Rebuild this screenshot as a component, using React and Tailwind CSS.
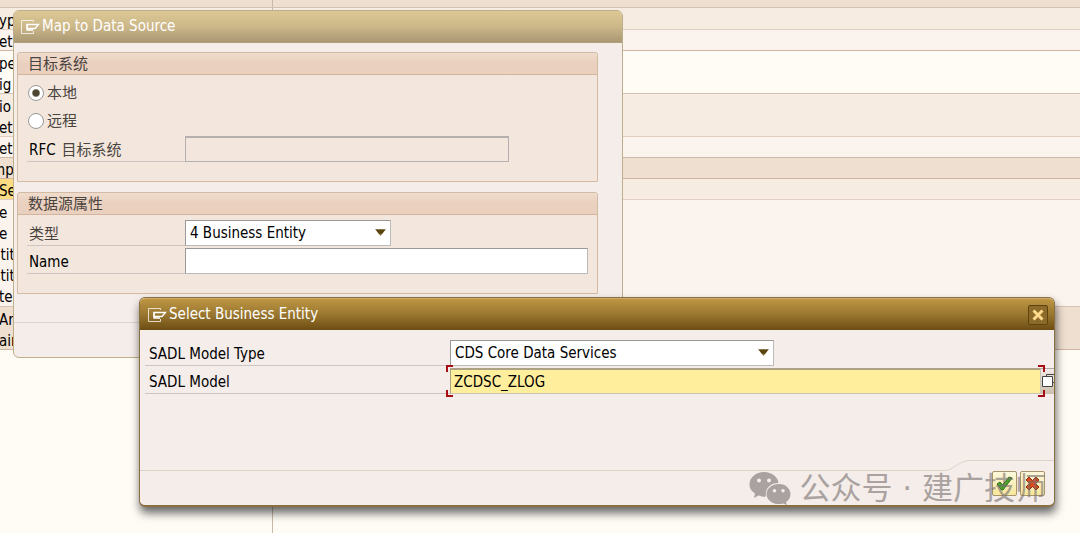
const latin = "font-['DejaVu_Sans_Condensed','Noto_Sans_CJK_SC',sans-serif]";

const bands = [
  { rows: ['yp'], box: 'h-[22px] bg-[#f6ece1] border-[#e0cfc0]' },
  { rows: ['et'], box: 'h-[21px] bg-[#fbf3ee] border-[#d0b6a2]' },
  { rows: ['pe', 'ig'], box: 'h-[43px] bg-[#fffcf6] border-[#d3c2b1]' },
  { rows: ['io', 'et'], box: 'h-[43px] bg-[#f6ece1] border-[#e0cfc0]' },
  { rows: ['etS'], box: 'h-[21px] bg-[#fbf3ee] border-[#cdb9a8]' },
  { rows: ['mp'], box: 'h-[21px] bg-[#efdfd0] border-[#cfb5a2]' },
  { rows: ['Set'], box: 'h-[21px] bg-[#f6ece1] border-[#e0cfc0]', selected: true },
  { rows: ['e', 'e', 'ntit', 'ntit', 'te'], box: 'h-[107px] bg-[#fbf3ee] border-[#d8c3b3]' },
  { rows: ['Art', 'ain'], box: 'h-[43px] bg-[#efdfd0] border-[#d0b6a2]' },
];

const clippedWide = ['ntit', 'mp'];

function PropertyList() {
  return (
    <div className="flex min-h-screen flex-col bg-[#fffcf6]">
      <div className="flex h-2 border-b border-[#d3c2b1] bg-[#efdfd0]">
        <div className="w-[273px] border-r border-[#c9b9ab]" />
      </div>
      {bands.map((band, i) => (
        <div key={i} className={`flex border-b ${band.box}`}>
          <div
            className={`flex w-[273px] flex-col border-r border-[#c9b9ab] ${band.selected ? 'bg-[#fcdc83]' : ''}`}
          >
            {band.rows.map((text, j) => (
              <span
                key={j}
                className={`flex min-h-0 flex-1 items-center pt-1 leading-4 ${clippedWide.includes(text) ? '-ml-2' : '-ml-px'}`}
              >
                {text}
              </span>
            ))}
          </div>
        </div>
      ))}
      <div className="flex flex-1">
        <div className="w-[273px] border-r border-[#c9b9ab]" />
      </div>
    </div>
  );
}

function WindowIcon() {
  return (
    <svg className="h-4 w-5 shrink-0" viewBox="0 0 20 16" fill="none" stroke="currentColor" aria-hidden="true">
      <path d="M13.500 3V1.500H1.500V14.500H13.500V12" strokeWidth="1" opacity="0.75" />
      <path d="M7 5.500H18.500L15 9.500H7Z" strokeWidth="1.300" />
      <path d="M7 5V11H13" strokeWidth="1.300" />
    </svg>
  );
}

function Group({ id, title, children }) {
  return (
    <fieldset aria-labelledby={id} className="rounded-t-[3px] border border-[#d3baa3] bg-[#f3e7dd]">
      <h3
        id={id}
        className="flex h-[22px] items-center rounded-t-[3px] border-b border-[#d3b49f] bg-linear-to-b from-[#efdccd] via-[#ead0be] to-[#ead0be] pl-2.5 leading-5 text-[#4a4440]"
      >
        {title}
      </h3>
      <div className="flex flex-col gap-0.5 pt-[5px] pr-[9px] pl-[9px]">{children}</div>
    </fieldset>
  );
}

function Arrow() {
  return (
    <svg
      className="pointer-events-none absolute top-[9px] right-[5px] h-[7px] w-[11px]"
      viewBox="0 0 11 7"
      aria-hidden="true"
    >
      <path d="M0 0H11L7 5L5.500 7L4 5Z" fill="#8a7850" />
      <path d="M1 1H10L7 5H4Z" fill="#5d460e" />
    </svg>
  );
}

function Select({ id, width, value }) {
  return (
    <div className={`relative flex ${width}`}>
      <select
        id={id}
        className="h-[26px] w-full appearance-none border border-t-[#999] border-r-[#bbb] border-b-[#bbb] border-l-[#999] bg-white pl-1 leading-5 text-black"
      >
        <option>{value}</option>
      </select>
      <Arrow />
    </div>
  );
}

const labelLine = 'flex h-[26px] items-center border-b border-[#cdc5c1] shrink-0 pt-[3px]';

export default function App() {
  return (
    <div className={`relative min-h-screen overflow-hidden text-[15px] text-black ${latin}`}>
      <PropertyList />

      <section
        aria-label="Map to Data Source"
        className="absolute top-2.5 left-[13px] flex h-[348px] w-[610px] flex-col rounded-md border border-[#bfae8b] bg-[#f5edea]"
      >
        <h2 className="flex h-8 items-center gap-0.5 rounded-t-[5px] border-b border-[#b5a179] bg-linear-to-b from-[#dcc794] via-[#cdb88a] to-[#a99873] pl-1.5 text-white">
          <WindowIcon />
          Map to Data Source
        </h2>
        <div className="flex flex-col gap-2.5 pt-[9px] pr-6 pl-[3px]">
          <Group id="group-target" title="目标系统">
            <label className="flex h-[26px] items-center gap-[3px] pl-px text-[#4a4440]">
              <input
                type="radio"
                name="target"
                defaultChecked
                className="size-4 appearance-none rounded-full border border-[#999] bg-white bg-radial from-[#4d4630] from-30% to-white to-45%"
              />
              <span className="pt-px">本地</span>
            </label>
            <label className="flex h-[26px] items-center gap-[3px] pl-px text-[#4a4440]">
              <input type="radio" name="target" className="size-4 appearance-none rounded-full border border-[#999] bg-white" />
              <span className="pt-px">远程</span>
            </label>
            <div className="flex pb-[19px]">
              <label htmlFor="rfc" className={`${labelLine} w-[158px] gap-1.5 pl-0.5`}>
                RFC <span className="text-[#4a4440]">目标系统</span>
              </label>
              <input
                id="rfc"
                disabled
                className="h-[26px] w-[324px] border border-t-2 border-[#b5b0ad] bg-[#f3e7dd] px-1"
              />
            </div>
          </Group>
          <Group id="group-source" title="数据源属性">
            <div className="flex">
              <label htmlFor="kind" className={`${labelLine} w-[158px] pl-0.5 text-[#4a4440]`}>
                类型
              </label>
              <Select id="kind" width="w-[206px]" value="4 Business Entity" />
            </div>
            <div className="flex pb-[19px]">
              <label htmlFor="name" className={`${labelLine} w-[158px] pl-0.5`}>
                Name
              </label>
              <input id="name" className="h-[26px] min-w-0 flex-1 border border-t-[#999] border-r-[#bbb] border-b-[#bbb] border-l-[#999] bg-white px-1" />
            </div>
          </Group>
        </div>
        <div className="mt-auto h-[35px] border-t border-[#dfd3cb]" />
      </section>

      <section
        aria-label="Select Business Entity"
        className="absolute top-[297px] right-[25px] left-[139px] flex h-[210px] flex-col rounded-md border border-b-2 border-[#8a6f42] bg-[#f5edea] shadow-[1px_6px_10px_rgba(0,0,0,0.6)]"
      >
        <div className="flex h-8 shrink-0 items-center justify-between rounded-t-[5px] border-t border-[#cdab68] bg-linear-to-b from-[#bd9643] via-[#9a7730] to-[#6d4d13] pr-1.5 pl-[7px] text-white">
          <h2 className="flex items-center gap-0.5">
            <WindowIcon />
            Select Business Entity
          </h2>
          <button
            type="button"
            aria-label="Close"
            className="flex size-5 items-center justify-center rounded-xs border border-[#5f430d] bg-[#8b6a2a]"
          >
            <svg className="size-3" viewBox="0 0 12 12" stroke="#ffd98c" strokeWidth="3" aria-hidden="true">
              <path d="M1.500 1.500L10.500 10.500M10.500 1.500L1.500 10.500" />
            </svg>
          </button>
        </div>
        <div className="flex flex-1 flex-col gap-0.5 pt-2.5 pl-[5px]">
          <div className="flex">
            <label htmlFor="modelType" className={`${labelLine} w-[305px] pl-1`}>
              SADL Model Type
            </label>
            <Select id="modelType" width="w-[324px]" value="CDS Core Data Services" />
          </div>
          <div className="relative flex">
            <label htmlFor="model" className={`${labelLine} w-[305px] pl-1`}>
              SADL Model
            </label>
            <input
              id="model"
              defaultValue="ZCDSC_ZLOG"
              className="h-[26px] min-w-0 flex-1 border border-t-2 border-t-[#aaa283] border-r-[#c9c5b5] border-b-[#c9c5b5] border-l-[#aaa283] bg-[#ffee9c] pl-[3px]"
            />
            <button type="button" aria-label="Search help" className="flex w-[13px] shrink-0 items-center justify-end border-t border-[#aaa] bg-linear-to-b from-[#f1e9e4] to-[#cdbfae]">
              <svg className="h-4 w-3" viewBox="0 0 12 16" fill="#fff" stroke="#444" aria-hidden="true">
                <path d="M4.500 4V0.500H12M10 8.500H12" fill="none" />
                <path d="M0.500 2.500H10.500V12.500H0.500Z" />
              </svg>
            </button>
            <svg className="pointer-events-none absolute -top-[3px] left-[301px] h-8 w-2" viewBox="0 0 8 32" fill="none" stroke="#a80f14" strokeWidth="2" aria-hidden="true">
              <path d="M7 1H1V7M1 25V31H7" />
            </svg>
            <svg className="pointer-events-none absolute -top-[3px] right-[9px] h-8 w-2" viewBox="0 0 8 32" fill="none" stroke="#a80f14" strokeWidth="2" aria-hidden="true">
              <path d="M1 1H7V7M7 25V31H1" />
            </svg>
          </div>
        </div>
        <div className="flex h-[45px] shrink-0 items-stretch">
          <div className="mt-2.5 flex-1 border-t border-[#ded2c8]" />
          <svg className="h-[11px] w-6" viewBox="0 0 24 11" fill="none" stroke="#ded2c8" aria-hidden="true">
            <path d="M0 10.500C5 10.500 14 0.500 24 0.500" />
          </svg>
          <div className="flex w-[84px] gap-[3px] border-t border-[#ded2c8] pt-2.5 pl-[22px]">
            <button type="button" aria-label="Continue" className="flex size-[25px] items-center justify-center rounded-xs border border-[#a8946a] bg-linear-to-b from-[#fdf8dc] to-[#f8e69a]">
              <svg className="size-[17px]" viewBox="0 0 17 17" aria-hidden="true">
                <path d="M1 9L4 7L6.500 10L13 2L16 3L7 15L5.500 15Z" fill="#4ba32a" stroke="#2f6e1b" />
              </svg>
            </button>
            <button type="button" aria-label="Cancel" className="flex size-[25px] items-center justify-center rounded-xs border border-[#a8946a] bg-linear-to-b from-[#fdf8dc] to-[#f8e69a]">
              <svg className="size-[15px]" viewBox="0 0 15 15" aria-hidden="true">
                <path d="M4 1L7.500 4.500L11 1L14 4L10.500 7.500L14 11L11 14L7.500 10.500L4 14L1 11L4.500 7.500L1 4Z" fill="#dc4a1a" stroke="#8f2b10" />
              </svg>
            </button>
          </div>
        </div>
      </section>

      <div className="pointer-events-none absolute top-[470px] right-[34px] flex items-center gap-2 text-[31px] leading-9 text-[#77716f] opacity-60">
        <svg className="h-[34px] w-[42px]" viewBox="0 0 42 34" fill="currentColor" aria-hidden="true">
          <path
            fillRule="evenodd"
            d="M15 1C23 1 29 6 29.500 12C21 12 15.500 18 17 25.500C14 26 11 25 9.500 24.500L5 27L6 22.500C2 20 0.500 17 0.500 13.500C0.500 6.500 7 1 15 1ZM10 7.500A2 2 0 1 0 10 11.500A2 2 0 1 0 10 7.500ZM20 7.500A2 2 0 1 0 20 11.500A2 2 0 1 0 20 7.500Z"
          />
          <path
            fillRule="evenodd"
            d="M30 13C37 13 41.500 18 41.500 23C41.500 26.500 40 29 37 31L38 34L34 32.500C25 35 17.500 29.500 17.500 23C17.500 17.500 23 13 30 13ZM25.500 18A1.800 1.800 0 1 0 25.500 21.600A1.800 1.800 0 1 0 25.500 18ZM34 18A1.800 1.800 0 1 0 34 21.600A1.800 1.800 0 1 0 34 18Z"
          />
        </svg>
        <span className="font-['DejaVu_Sans','Noto_Sans_CJK_SC',sans-serif] whitespace-nowrap">公众号 · 建广技师</span>
      </div>
    </div>
  );
}
